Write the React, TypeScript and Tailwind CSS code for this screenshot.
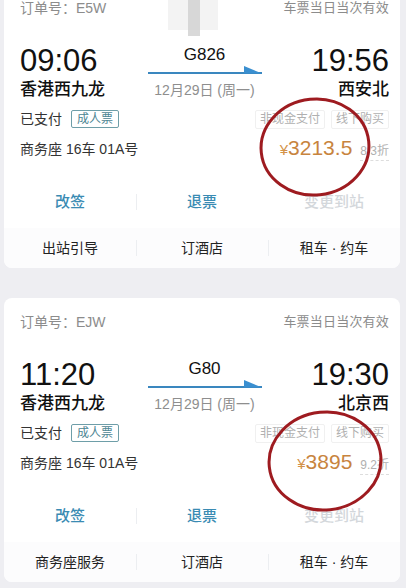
import React from "react";

const cjk = { fontFamily: '"Liberation Sans", "Noto Sans CJK SC", sans-serif' };

type T = {
  order: string;
  train: string;
  dep: string;
  arr: string;
  from: string;
  to: string;
  price: string;
  discount: string;
  service: string;
  ellipse: { cx: number; cy: number; rx: number; ry: number };
  redact?: boolean;
};

function Sep() {
  return <div className="absolute left-0 top-1/2 h-[16px] w-px -translate-y-1/2 bg-[#eceef1]" />;
}

function Card({ t }: { t: T }) {
  return (
    <div className="relative rounded-[8px] bg-white">
      <div className="px-[16px] pr-[11px] pt-[14px]">
        <div className="flex h-[20px] items-center justify-between text-[#8c8c8c]">
          <span className="text-[14px]">订单号：{t.order}</span>
          <span className="text-[13px] tracking-[0.2px]">车票当日当次有效</span>
        </div>

        <div className="mt-[26px] grid grid-cols-[1fr_auto_1fr]">
          <div className="flex flex-col">
            <span className="h-[34px] text-[31px] leading-[34px] text-[#111]">{t.dep}</span>
            <span className="h-[24px] text-[17px] font-medium leading-[24px] text-[#111]">{t.from}</span>
          </div>
          <div className="flex w-[114px] flex-col items-center">
            <span className="h-[22px] text-[17px] leading-[22px] text-[#111]">{t.train}</span>
            <svg width="114" height="8" viewBox="0 0 114 8" className="block">
              <line x1="0" y1="7" x2="114" y2="7" stroke="#3a87bf" strokeWidth="2" />
              <polygon points="96,0 114,7.5 96,7.5" fill="#3a8fd0" />
            </svg>
            <span className="mt-[6px] h-[20px] whitespace-nowrap text-[14px] leading-[20px] text-[#8e8e8e]">
              12月29日 (周一)
            </span>
          </div>
          <div className="flex flex-col items-end">
            <span className="h-[34px] text-[31px] leading-[34px] text-[#111]">{t.arr}</span>
            <span className="h-[24px] text-[17px] font-medium leading-[24px] text-[#111]">{t.to}</span>
          </div>
        </div>

        <div className="mt-[6px] flex h-[22px] items-center justify-between">
          <div className="flex items-center gap-[9px]">
            <span className="text-[14px] text-[#333]">已支付</span>
            <span className="flex h-[18px] items-center rounded-[2px] border border-[#6e9ea8] px-[5px] text-[12px] text-[#4d8593]">
              成人票
            </span>
          </div>
          <div className="flex items-center gap-[6px]">
            <span className="flex h-[19px] items-center rounded-[2px] border border-[#f0f0f0] px-[4px] text-[12px] text-[#b0b0b0]">
              非现金支付
            </span>
            <span className="flex h-[19px] items-center rounded-[2px] border border-[#f0f0f0] px-[4px] text-[12px] text-[#b0b0b0]">
              线下购买
            </span>
          </div>
        </div>

        <div className="mt-[7px] flex h-[24px] items-center justify-between">
          <span className="text-[14px] text-[#333]">商务座 16车 01A号</span>
          <div className="flex items-baseline">
            <span className="text-[15px] text-[#d39248]">¥</span>
            <span className="text-[21px] leading-[24px] text-[#c8843e]">{t.price}</span>
            <span className="ml-[8px] border-b border-dashed border-[#ddd] text-[12px] text-[#b0b0b0]">{t.discount}</span>
          </div>
        </div>
      </div>

      <div className="mt-[19px] grid h-[44px] grid-cols-3 items-center text-[15px] font-medium">
        <div className="relative flex justify-center text-[#3a8bb3]">改签</div>
        <div className="relative flex justify-center text-[#3a8bb3]">
          <Sep />
          退票
        </div>
        <div className="relative flex justify-center text-[#d3d7db]">变更到站</div>
      </div>

      <div className="mt-[4px] grid h-[40px] grid-cols-3 items-center rounded-b-[8px] bg-[#fcfcfd] text-[14px] text-[#222]">
        <div className="relative flex justify-center">{t.service}</div>
        <div className="relative flex justify-center">
          <Sep />
          订酒店
        </div>
        <div className="relative flex justify-center">
          <Sep />
          租车 · 约车
        </div>
      </div>

      <svg className="pointer-events-none absolute left-0 top-0" width="396" height="284">
        <ellipse
          cx={t.ellipse.cx}
          cy={t.ellipse.cy}
          rx={t.ellipse.rx}
          ry={t.ellipse.ry}
          fill="none"
          stroke="#9e1b20"
          strokeWidth="3"
          transform={`rotate(-6 ${t.ellipse.cx} ${t.ellipse.cy})`}
        />
      </svg>

      {t.redact && (
        <div className="pointer-events-none absolute left-[164px] top-[16px] h-[30px] w-[50px] bg-[#f3f3f3]">
          <div className="ml-[20px] h-[36px] w-[12px] bg-[#cfcfcf] opacity-80" />
        </div>
      )}
    </div>
  );
}

export default function App() {
  const tickets: T[] = [
    {
      order: "E5W",
      train: "G826",
      dep: "09:06",
      arr: "19:56",
      from: "香港西九龙",
      to: "西安北",
      price: "3213.5",
      discount: "8.3折",
      service: "出站引导",
      ellipse: { cx: 311, cy: 163, rx: 54, ry: 48 },
      redact: true,
    },
    {
      order: "EJW",
      train: "G80",
      dep: "11:20",
      arr: "19:30",
      from: "香港西九龙",
      to: "北京西",
      price: "3895",
      discount: "9.2折",
      service: "商务座服务",
      ellipse: { cx: 321, cy: 163, rx: 56, ry: 49 },
    },
  ];
  return (
    <div className="h-[588px] w-[406px] overflow-hidden bg-[#eeeef2] pl-[4px] pr-[6px]" style={cjk}>
      <div className="-mt-[16px] flex flex-col gap-[30px]">
        {tickets.map((t) => (
          <Card key={t.order} t={t} />
        ))}
      </div>
    </div>
  );
}
